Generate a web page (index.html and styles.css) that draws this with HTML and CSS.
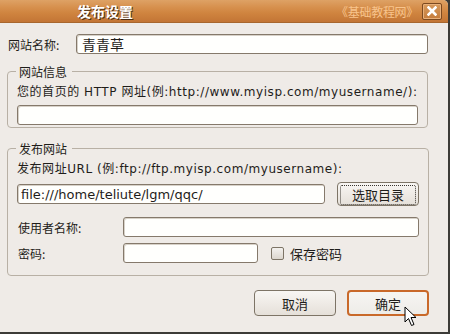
FILE: index.html
```html
<!DOCTYPE html>
<html lang="zh-CN">
<head>
    <meta charset="UTF-8">
    <title>发布设置</title>
    <link rel="stylesheet" href="styles.css">
</head>
<body>
    <div class="window">
        <div class="titlebar">
            <span class="title">发布设置</span>
            <span class="brand">《基础教程网》</span>
            <span class="close">
                <svg width="10" height="10" viewBox="0 0 10 10">
                    <path d="M1.5 1.5 L8.5 8.5 M8.5 1.5 L1.5 8.5" stroke="#fff" stroke-width="2.6" stroke-linecap="square"/>
                </svg>
            </span>
        </div>
        <div class="content">
            <div class="row name-row">
                <label class="lbl">网站名称:</label>
                <input type="text" class="field grow" value="青青草">
            </div>

            <fieldset class="group info">
                <legend>网站信息</legend>
                <div class="hint">您的首页的 HTTP 网址(例:http://www.myisp.com/myusername/):</div>
                <input type="text" class="field wide">
            </fieldset>

            <fieldset class="group publish">
                <legend>发布网站</legend>
                <div class="hint">发布网址URL (例:ftp://ftp.myisp.com/myusername):</div>
                <div class="row url-row">
                    <input type="text" class="field url" value="file:///home/teliute/lgm/qqc/">
                    <button type="button" class="btn pick"><span>选取目录</span></button>
                </div>
                <div class="row user-row">
                    <label class="lbl col">使用者名称:</label>
                    <input type="text" class="field grow">
                </div>
                <div class="row pass-row">
                    <label class="lbl col">密码:</label>
                    <input type="password" class="field pass">
                    <label class="check"><span class="box"></span>保存密码</label>
                </div>
            </fieldset>

            <div class="actions">
                <button type="button" class="btn action">取消</button>
                <button type="button" class="btn action primary">确定</button>
            </div>
        </div>

        <svg class="cursor" width="14" height="22" viewBox="0 0 14 22">
            <path d="M1 1 L1 16 L4.5 12.5 L7.5 19.5 L10 18.5 L7 11.5 L12 11.5 Z" fill="#fff" stroke="#000" stroke-width="1" stroke-linejoin="miter"/>
        </svg>
    </div>
</body>
</html>
```

FILE: styles.css
```css
body {
    margin: 0;
    background-color: #3c3b37;
    font-family: "DejaVu Sans", "Noto Sans CJK SC", sans-serif;
    font-size: 12px;
    color: #1f1d1a;
}

.window {
    position: relative;
    width: 448px;
    height: 332px;
    background-color: #efebe7;
    border-top-right-radius: 5px;
    overflow: hidden;
}

.titlebar {
    height: 22px;
    display: flex;
    align-items: center;
    background: linear-gradient(#dea265, #d68f4c 35%, #cf843f 60%, #c37535);
    border-bottom: 1px solid #a8672e;
}

.title {
    margin-left: 77px;
    font-family: "Noto Sans CJK SC", sans-serif;
    font-size: 14px;
    font-weight: bold;
    color: #fff;
    text-shadow: 1px 1px 0 #4a2c12;
    flex: 1;
}

.brand {
    font-family: "Noto Sans CJK SC", sans-serif;
    font-size: 12px;
    letter-spacing: -0.3px;
    color: #f8c48c;
    margin-right: 4px;
}

.close {
    width: 18px;
    height: 15px;
    margin-right: 6px;
    display: flex;
    align-items: center;
    justify-content: center;
    border: 1px solid #7c4a20;
    border-radius: 2px;
    background: linear-gradient(#d79a5c, #c57c3c);
    box-shadow: inset 0 0 0 1px #e8b07a;
}

.content {
    padding: 10px 20px 0 7px;
}

.row {
    display: flex;
    align-items: center;
}

.lbl {
    font-family: "Noto Sans CJK SC", sans-serif;
    font-size: 12px;
}

.name-row {
    margin-top: 1px;
}

.name-row .lbl {
    width: 68px;
    padding-left: 1px;
}

.field {
    box-sizing: border-box;
    height: 20px;
    border: 1px solid #85796b;
    border-radius: 3px;
    background-color: #fffffd;
    box-shadow: inset 1px 1px 0 #d8d2c9;
    font-family: "DejaVu Sans", "Noto Sans CJK SC", sans-serif;
    font-size: 13px;
    color: #1f1d1a;
    padding: 0 3px;
    outline: none;
}

.name-row .field {
    font-family: "Noto Sans CJK SC", sans-serif;
    font-size: 14px;
    padding-left: 5px;
}

.grow {
    flex: 1;
}

.group {
    margin: 9px 0 0 0;
    padding: 0 9px 0 9px;
    border: 1px solid #b8b0a5;
    border-radius: 4px;
}

.group legend {
    font-family: "Noto Sans CJK SC", sans-serif;
    font-size: 12px;
    padding: 0 5px 0 3px;
    margin-left: -1px;
}

.hint {
    font-size: 12px;
    white-space: nowrap;
    letter-spacing: 0.55px;
    margin-top: 2px;
}

.info .field {
    display: block;
    width: 100%;
    margin: 6px 0 2px;
}

.publish {
    margin-top: 12px;
    padding-bottom: 12px;
}

.publish .hint {
    margin-top: 2px;
}

.url-row {
    margin-top: 6px;
}

.url {
    width: 308px;
    padding-left: 3px;
}

.btn {
    font-family: "Noto Sans CJK SC", sans-serif;
    font-size: 13px;
    color: #1f1d1a;
    border: 1px solid #7d7466;
    border-radius: 4px;
    background: linear-gradient(#f8f6f3, #efebe6 50%, #e5e0d9);
    cursor: pointer;
}

.pick {
    margin-left: 12px;
    width: 82px;
    height: 24px;
    padding: 2px;
}

.pick span {
    display: block;
    height: 100%;
    line-height: 17px;
    border: 1px dotted #3a3630;
    border-radius: 2px;
}

.user-row {
    margin-top: 11px;
}

.pass-row {
    margin-top: 6px;
}

.col {
    width: 105px;
    padding-left: 1px;
}

.pass {
    width: 135px;
}

.check {
    display: flex;
    align-items: center;
    margin-left: 13px;
    font-family: "Noto Sans CJK SC", sans-serif;
    font-size: 13px;
}

.box {
    width: 11px;
    height: 11px;
    border: 1px solid #7d7466;
    border-radius: 2px;
    background: linear-gradient(#f3f1ee, #dcd6ce);
    margin-right: 6px;
}

.actions {
    display: flex;
    justify-content: flex-end;
    gap: 11px;
    margin-top: 14px;
    margin-right: -1px;
}

.action {
    width: 82px;
    height: 26px;
}

.primary {
    border: 2px solid #c9692a;
    background: linear-gradient(#f6f5f2, #eeece8);
}

.cursor {
    position: absolute;
    left: 404px;
    top: 306px;
}
```
